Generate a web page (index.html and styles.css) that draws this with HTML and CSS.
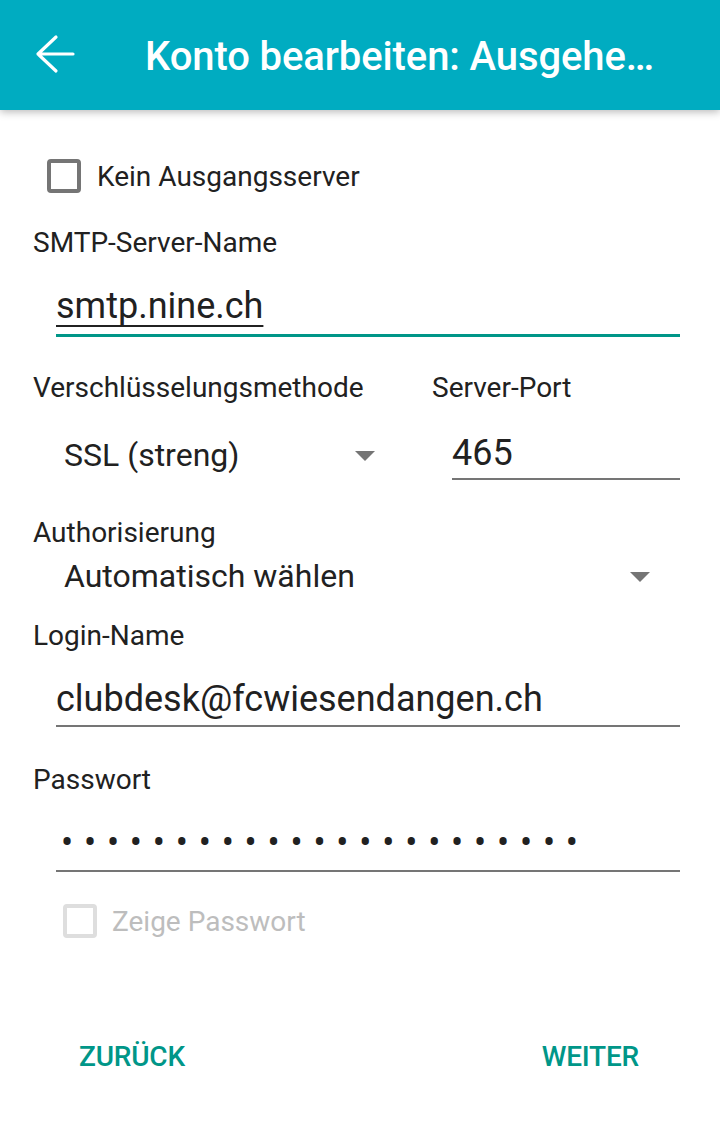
FILE: index.html
```html
<!DOCTYPE html>
<html lang="de">
<head>
  <meta charset="UTF-8" />
  <meta name="viewport" content="width=device-width, initial-scale=1" />
  <title>Konto bearbeiten: Ausgehender Server</title>
  <link rel="stylesheet" href="styles.css">
</head>
<body>

<header class="appbar">
  <svg class="back" width="48" height="48" viewBox="0 0 48 48">
    <path d="M42 23H7M25 6L7 23L25 40" fill="none" stroke="#fff" stroke-width="3.2" stroke-linecap="round" stroke-linejoin="round"/>
  </svg>
  <h1 class="title">Konto bearbeiten: Ausgehe…</h1>
</header>

<main class="form">
  <label class="check check-top">
    <span class="box"></span>
    <span>Kein Ausgangsserver</span>
  </label>

  <div class="label label-smtp">SMTP-Server-Name</div>
  <div class="field field-focus field-smtp"><span class="composing">smtp.nine.ch</span></div>

  <div class="pair">
    <div class="col">
      <div class="label label-pair">Verschlüsselungsmethode</div>
      <div class="spinner spinner-ssl">
        <span>SSL (streng)</span>
        <span class="caret"></span>
      </div>
    </div>
    <div class="col">
      <div class="label label-pair">Server-Port</div>
      <div class="field field-port">465</div>
    </div>
  </div>

  <div class="label label-auth">Authorisierung</div>
  <div class="spinner spinner-auth">
    <span>Automatisch wählen</span>
    <span class="caret"></span>
  </div>

  <div class="label label-login">Login-Name</div>
  <div class="field field-login">clubdesk@fcwiesendangen.ch</div>

  <div class="label label-pass">Passwort</div>
  <div class="field field-pass"><span class="dots">•••••••••••••••••••••••</span></div>

  <label class="check check-off">
    <span class="box"></span>
    <span>Zeige Passwort</span>
  </label>

  <div class="actions">
    <button class="flat">Zurück</button>
    <button class="flat">Weiter</button>
  </div>
</main>

</body>
</html>
```

FILE: styles.css
```css
* {
  box-sizing: border-box;
}

body {
  margin: 0;
  font-family: Roboto, "Noto Sans", sans-serif;
  background: #fff;
  color: #212121;
}

/* app bar */
.appbar {
  height: 110px;
  background: #00acc1;
  display: flex;
  align-items: center;
  box-shadow: 0 2px 8px rgba(0,0,0,0.28);
  position: relative;
  z-index: 1;
}

.back {
  margin-left: 31px;
  flex: none;
}

.title {
  margin: 4px 0 0 66px;
  font-size: 40px;
  line-height: 48px;
  font-weight: 500;
  letter-spacing: -0.1px;
  color: #fff;
  white-space: nowrap;
}

/* form */
.form {
  padding: 32px 40px 0 33px;
}

.label {
  font-size: 28px;
  line-height: 32px;
  height: 32px;
}

.label-smtp { margin-top: 17px; }
.label-pair { margin-top: 35px; }
.label-auth { margin-top: 37px; }
.label-login { margin-top: 22px; }
.label-pass { margin-top: 37px; }

.field {
  margin-left: 23px;
  font-size: 36px;
  line-height: 44px;
  border-bottom: 2px solid #757575;
}

.field-focus {
  border-bottom: 3px solid #009688;
}

.field-smtp { margin-top: 25px; padding-bottom: 6px; }
.field-port { margin-left: 20px; margin-top: 27px; padding-bottom: 3px; }
.field-login { margin-top: 25px; padding-bottom: 4px; }
.field-pass { margin-top: 25px; padding-bottom: 5px; }

.composing {
  text-decoration: underline;
  text-decoration-thickness: 2px;
  text-underline-offset: 7px;
}

.dots {
  letter-spacing: 10.8px;
  padding-left: 5px;
}

/* two columns */
.pair {
  display: grid;
  grid-template-columns: 366px 248px;
  column-gap: 33px;
}

.spinner {
  display: flex;
  align-items: center;
  justify-content: space-between;
  height: 44px;
  font-size: 32px;
  padding-left: 31px;
}

.spinner-ssl { margin-top: 29px; padding-right: 24px; }
.spinner-auth { margin-top: 5px; padding-right: 30px; }

.caret {
  width: 0;
  height: 0;
  border-left: 10px solid transparent;
  border-right: 10px solid transparent;
  border-top: 10px solid #757575;
  margin-top: 2px;
}

/* checkboxes */
.check {
  display: flex;
  align-items: center;
  height: 68px;
  font-size: 28px;
}

.check .box {
  width: 34px;
  height: 34px;
  border: 4px solid #757575;
  border-radius: 4px;
  margin-right: 16px;
  flex: none;
}

.check-top {
  padding-left: 14px;
}

.check-off {
  margin-top: 15px;
  padding-left: 30px;
  color: #bdbdbd;
}

.check-off .box {
  border-color: #dedede;
  margin-right: 15px;
}

/* buttons */
.actions {
  display: flex;
  justify-content: space-between;
  margin-top: 65px;
  padding: 0 25px 0 30px;
}

.flat {
  background: none;
  border: none;
  height: 72px;
  padding: 0 16px;
  font-family: inherit;
  font-size: 28px;
  font-weight: 500;
  text-transform: uppercase;
  color: #009688;
  letter-spacing: -0.2px;
}
```
